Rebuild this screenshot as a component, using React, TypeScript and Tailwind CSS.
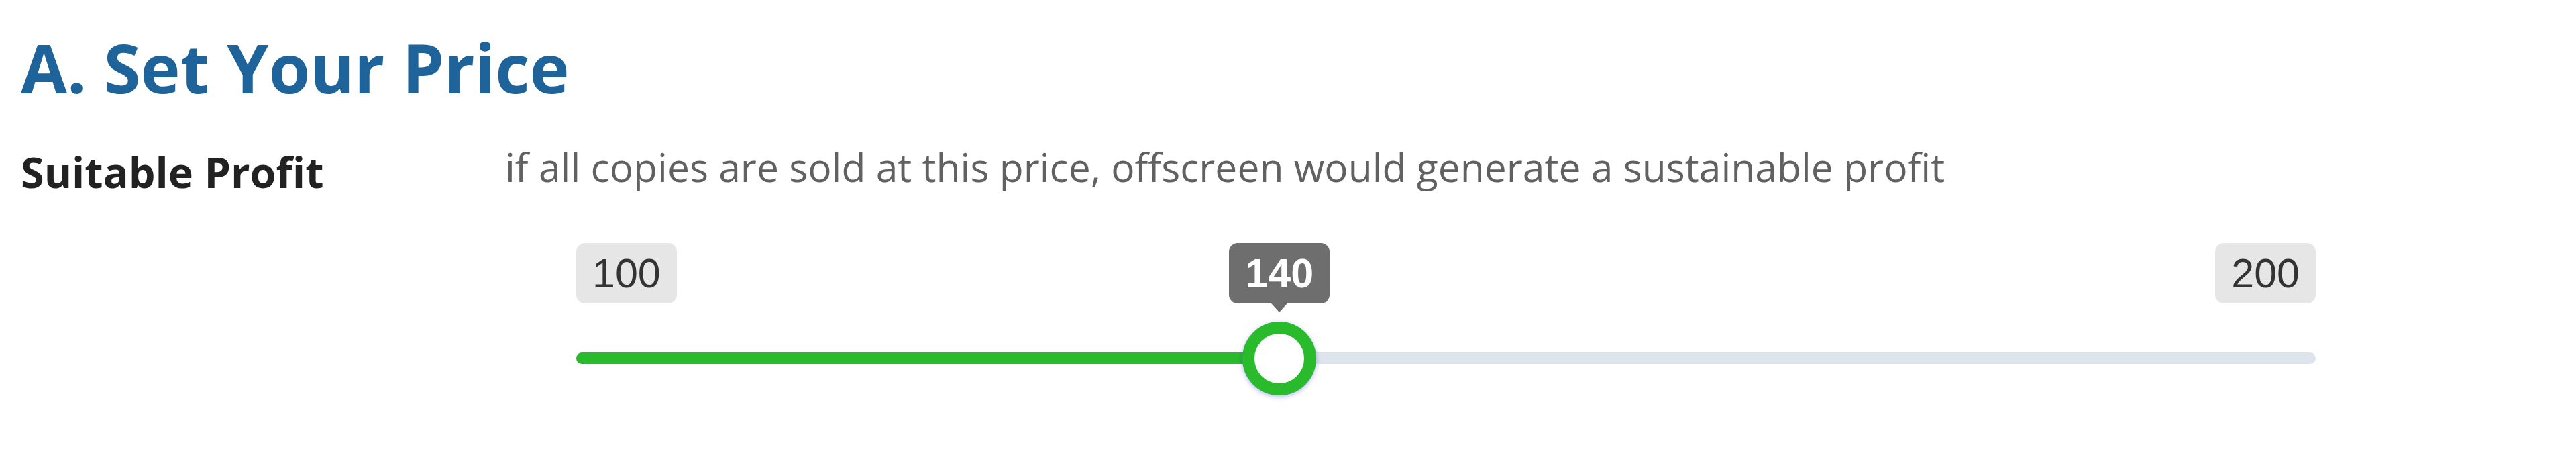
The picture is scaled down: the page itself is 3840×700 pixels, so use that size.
import React from 'react';

const SANS = '"Open Sans", "Noto Sans", sans-serif';
const NUM = '"Liberation Sans", Arial, sans-serif';

const MIN = 100;
const MAX = 200;
const TRACK_W = 2593;
const HANDLE = 110;

// Range slider with fixed min/max badges and a value tooltip over the handle.
const PriceSlider = ({ value }: { value: number }) => {
  const pct = (value - MIN) / (MAX - MIN);
  const handleLeft = (TRACK_W - HANDLE) * pct;
  const center = handleLeft + HANDLE / 2;

  return (
    <div className="relative w-[2593px] ml-[106px] mt-[85px]" style={{ fontFamily: NUM }}>
      {/* min / max labels */}
      <div className="flex justify-between">
        <span className="h-[90px] px-[24px] rounded-[13px] bg-[#e6e6e6] text-[#333] text-[61px] leading-[90px]">
          {MIN}
        </span>
        <span className="h-[90px] px-[24px] rounded-[13px] bg-[#e6e6e6] text-[#333] text-[61px] leading-[90px]">
          {MAX}
        </span>
      </div>

      {/* current value */}
      <div
        className="absolute top-0 w-[150px] h-[90px] rounded-[13px] bg-[#6e6e6e] text-white text-[61px] font-bold leading-[90px] text-center"
        style={{ left: center - 75 }}
      >
        {value}
        <span className="absolute left-1/2 -translate-x-1/2 top-full w-0 h-0 border-x-[12px] border-x-transparent border-t-[13px] border-t-[#6e6e6e]" />
      </div>

      {/* track */}
      <div className="relative mt-[73px] h-[17px] rounded-full bg-[#dee4ec]">
        <div className="absolute left-0 top-0 h-full rounded-full bg-[#29bb2b]" style={{ width: center }} />
        <div
          className="absolute top-[-46px] w-[110px] h-[110px] rounded-full border-[18px] border-[#29bb2b] bg-white shadow-[0_2px_7px_rgba(0,0,255,0.3)]"
          style={{ left: handleLeft }}
        />
      </div>
    </div>
  );
};

export default function App() {
  return (
    <div className="min-h-[700px] bg-white pl-[31px] pt-[50px]" style={{ fontFamily: SANS }}>
      <h2 className="text-[100px] leading-[100px] font-bold text-[#1e6399]">A. Set Your Price</h2>

      <div className="flex mt-[69px]">
        <div className="w-[722px] shrink-0 mt-[5px] text-[63px] leading-[63px] font-bold text-[#222]">
          Suitable Profit
        </div>
        <div className="flex flex-col">
          <p className="text-[58.8px] leading-[58px] text-[#616161] whitespace-nowrap">
            if all copies are sold at this price, offscreen would generate a sustainable profit
          </p>
          <PriceSlider value={140} />
        </div>
      </div>
    </div>
  );
}
